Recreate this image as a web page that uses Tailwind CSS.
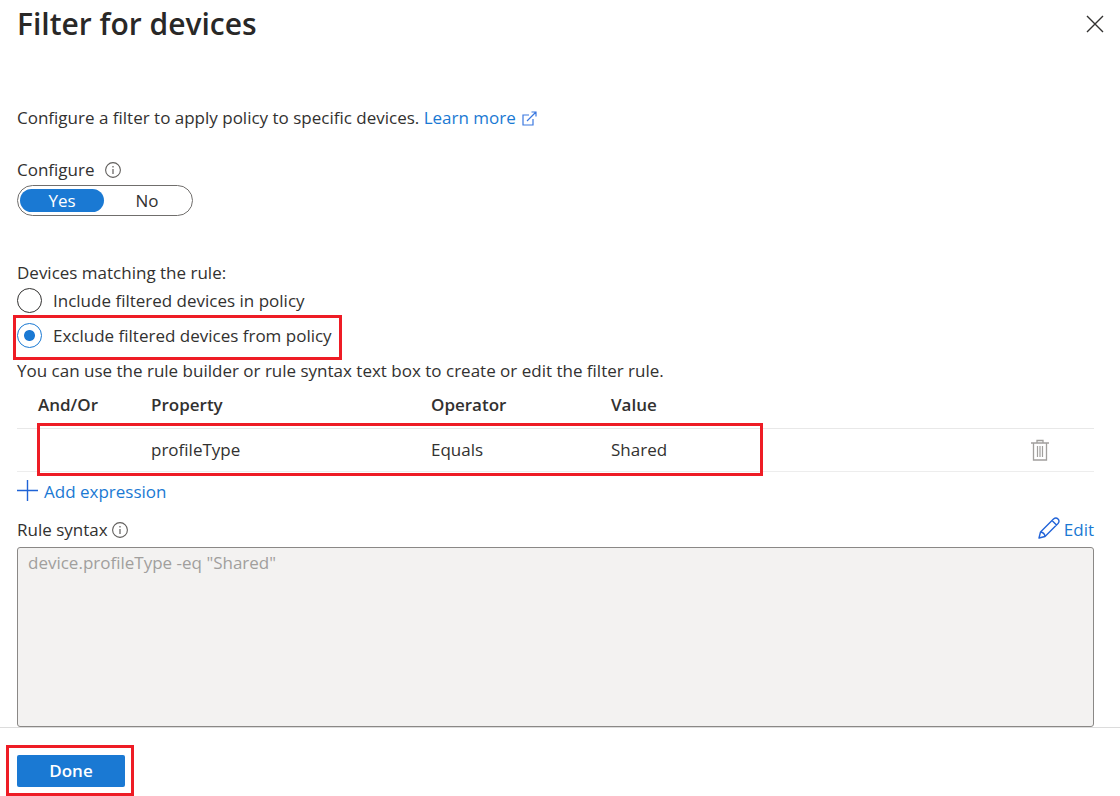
<!DOCTYPE html>
<html lang="en">
<head>
<meta charset="utf-8">
<meta name="viewport" content="width=device-width, initial-scale=1">
<title>Filter for devices</title>
<script src="https://cdn.jsdelivr.net/npm/@tailwindcss/browser@4"></script>
</head>
<body class="flex min-h-screen flex-col bg-white font-['Open_Sans',sans-serif] text-[17px] leading-6 text-[#323130]">
<header class="flex h-12 items-center justify-between pr-4 pl-[17px]">
  <h1 class="text-[30px] leading-12 font-semibold text-[#292827]">Filter for devices</h1>
  <button type="button" aria-label="Close">
    <svg class="size-[18px]" viewBox="0 0 18 18" fill="none" stroke="#323130" stroke-width="1.4"><path d="M1 1l16 16M17 1L1 17"/></svg>
  </button>
</header>

<main class="flex flex-1 flex-col pt-[58px] pr-[26px] pl-[17px]">
  <p class="flex items-center">Configure a filter to apply policy to specific devices.&nbsp;<a href="#" class="flex items-center gap-1.5 text-[#1a79d3]">Learn more
    <svg class="size-[15px]" viewBox="0 0 15 15" fill="none" stroke="#3b78e0" stroke-width="1.2"><path d="M7 4H1v10h10V8M5 10l9-9M9.500 1H14v4.500"/></svg></a>
  </p>

  <fieldset class="mt-7">
    <legend class="flex items-center gap-2.5">Configure
      <svg class="size-4" viewBox="0 0 16 16" fill="none" stroke="#605e5c"><circle cx="8" cy="8" r="7.400" stroke-width="1.1"/><path d="M8 7v5M8 4v1.500" stroke-width="1.2"/></svg>
    </legend>
    <div class="mt-[3px] flex h-[31px] w-44 rounded-full border border-[#706e6c] p-[3px] pr-0.5 pl-0.5 leading-[23px]">
      <button type="button" aria-pressed="true" class="w-[84px] rounded-full bg-[#1a79d3] text-white">Yes</button>
      <button type="button" aria-pressed="false" class="flex-1 rounded-full">No</button>
    </div>
  </fieldset>

  <fieldset class="mt-[45px]">
    <legend>Devices matching the rule:</legend>
    <label class="mt-[3px] flex w-fit items-center gap-[11px]">
      <input type="radio" name="mode" class="size-[25px] appearance-none rounded-full border border-[#323130]">
      <span>Include filtered devices in policy</span>
    </label>
    <label class="relative mt-2.5 flex w-fit items-center gap-[11px]">
      <input type="radio" name="mode" checked class="size-[25px] appearance-none rounded-full border border-[#1a79d3] bg-radial from-[#1a79d3] from-[5px] to-white to-[6px]">
      <span>Exclude filtered devices from policy</span>
      <span class="pointer-events-none absolute -top-2 -right-2.5 -bottom-3 -left-1 border-3 border-[#ee1c25]"></span>
    </label>
  </fieldset>

  <p class="mt-[11px]">You can use the rule builder or rule syntax text box to create or edit the filter rule.</p>

  <div class="relative">
    <table class="w-full table-fixed text-left">
      <colgroup><col class="w-[134px]"><col class="w-[280px]"><col class="w-[180px]"><col><col class="w-[63px]"></colgroup>
      <thead>
        <tr class="h-[45px] border-b border-[#e8e8e8]">
          <th class="pl-[21px] font-semibold">And/Or</th><th class="font-semibold">Property</th><th class="font-semibold">Operator</th><th class="font-semibold">Value</th><td></td>
        </tr>
      </thead>
      <tbody>
        <tr class="h-[43px] border-b border-[#ededed]">
          <td></td><td>profileType</td><td>Equals</td><td>Shared</td>
          <td><button type="button" aria-label="Delete expression" class="block">
            <svg class="h-[22px] w-[18px]" viewBox="0 0 18 22" fill="none" stroke="#a19f9d"><path d="M0 4h18M6 4V1.500h6V4M2.500 4v17h13V4" stroke-width="1.3"/><path d="M6.500 7v11M9 7v11M11.500 7v11" stroke-width="1.2"/></svg>
          </button></td>
        </tr>
      </tbody>
    </table>
    <span class="pointer-events-none absolute -bottom-1 left-5 h-[53px] w-[67.4%] border-3 border-[#ee1c25]"></span>
  </div>

  <button type="button" class="mt-2 flex items-center gap-1.5 self-start text-[#1a79d3]">
    <svg class="mb-1 size-[21px]" viewBox="0 0 21 21" fill="none" stroke="#1f63d6" stroke-width="1.4"><path d="M0 10.500h21M10.500 0v21"/></svg>Add expression
  </button>

  <div class="mt-3 flex items-center justify-between">
    <label for="syntax" class="flex items-center gap-1">Rule syntax
      <svg class="size-4" viewBox="0 0 16 16" fill="none" stroke="#605e5c"><circle cx="8" cy="8" r="7.400" stroke-width="1.1"/><path d="M8 7v5M8 4v1.500" stroke-width="1.2"/></svg>
    </label>
    <button type="button" class="flex items-center gap-1 text-[#1a79d3]">
      <svg class="mb-1 size-[22px]" viewBox="0 0 22 22" fill="none" stroke="#2163d8" stroke-width="1.4" stroke-linejoin="round"><path d="M1 21l1.500-6L15.500 2Q18-.2 20 2T20 6.500L7 19.500zM2.500 15Q6.500 15.500 7 19.500M14 3.500L18.500 8"/></svg>Edit
    </button>
  </div>
  <textarea id="syntax" disabled class="mt-1 block min-h-40 w-full flex-1 resize-none rounded-[3px] border border-[#8a8886] bg-[#f3f2f1] px-2.5 py-[3px] text-[#a19f9d]">device.profileType -eq "Shared"</textarea>
</main>

<footer class="border-t border-[#dcdcdc] pt-[27px] pb-[9px] pl-[17px]">
  <div class="relative w-[108px]">
    <button type="button" class="block h-8 w-full rounded-xs bg-[#1a79d3] font-semibold text-white">Done</button>
    <span class="pointer-events-none absolute -top-2.5 -right-[9px] -bottom-[9px] -left-[11px] border-3 border-[#ee1c25]"></span>
  </div>
</footer>
</body>
</html>
